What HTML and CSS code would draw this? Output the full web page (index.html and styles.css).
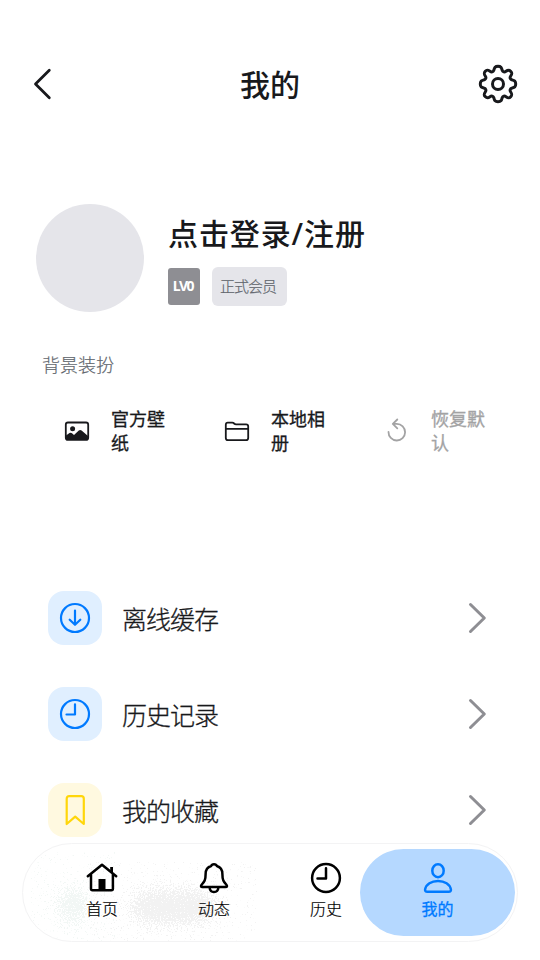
FILE: index.html
```html
<!DOCTYPE html>
<html lang="zh-CN">
<head>
<meta charset="utf-8">
<title>我的</title>
<link rel="stylesheet" href="styles.css">
</head>
<body>
<div class="app">
  <header class="topbar">
    <svg class="back" width="20" height="32" viewBox="0 0 20 32"><path d="M17.3 2.3 3.5 16l13.8 13.7"/></svg>
    <h1>我的</h1>
    <svg class="gear" width="40" height="40" viewBox="-20 -20 40 40"><circle r="5.5"/><path d="M-4.2-13.7C-3.4-16.5-3.2-17.7 0-17.7S3.4-16.5 4.2-13.7C5-12 6.4-11.6 8-12.7C10.2-14.2 11-14.2 12.7-12.7S14.2-10.2 12.7-8C11.6-6.4 12-5 13.7-4.2C16.5-3.4 17.7-3.2 17.7 0S16.5 3.4 13.7 4.2C12 5 11.6 6.4 12.7 8C14.2 10.2 14.2 11 12.7 12.7S10.2 14.2 8 12.7C6.4 11.6 5 12 4.2 13.7C3.4 16.5 3.2 17.7 0 17.7S-3.4 16.5-4.2 13.7C-5 12-6.4 11.6-8 12.7C-10.2 14.2-11 14.2-12.7 12.7S-14.2 10.2-12.7 8C-11.6 6.4-12 5-13.7 4.2C-16.5 3.4-17.7 3.2-17.7 0S-16.5-3.4-13.7-4.2C-12-5-11.6-6.4-12.7-8C-14.2-10.2-14.2-11-12.7-12.7S-10.2-14.2-8-12.7C-6.4-11.6-5-12-4.2-13.7Z"/></svg>
  </header>
  <section class="profile">
    <div class="avatar"></div>
    <div class="identity">
      <h2>点击登录/注册</h2>
      <div class="badges"><span class="level">LV0</span><span class="member">正式会员</span></div>
    </div>
  </section>
  <section class="decor">
    <h3>背景装扮</h3>
    <div class="actions">
      <div class="action">
        <svg width="26" height="26" viewBox="0 0 26 26"><rect x="1.8" y="4.5" width="22.4" height="17.4" rx="2.2"/><circle class="solid" cx="8.6" cy="10.7" r="2.5"/><path class="solid" d="M2 17.5 5.5 15Q7 14.2 8.3 15.5L10 17l4.8-4.5q1.4-1.2 2.8 0L24 18v3q0 1-1 1H3q-1 0-1-1z"/></svg>
        <span>官方壁纸</span>
      </div>
      <div class="action">
        <svg width="26" height="26" viewBox="0 0 26 26"><path d="M1.8 20V6.7q0-2 2-2h4.5q1 0 1.8.8t2 .8h10q2.1 0 2.1 2V20q0 2.2-2.2 2.2H4q-2.2 0-2.2-2.2zM2 10.9h22"/></svg>
        <span>本地相册</span>
      </div>
      <div class="action disabled">
        <svg width="26" height="26" viewBox="0 0 26 26"><path d="M4.5 14a8.3 8.3 0 1 0 8.3-8.1H9.2M13.3 1.5 8.8 5.9l4.5 4.4"/></svg>
        <span>恢复默认</span>
      </div>
    </div>
  </section>
  <main class="list">
    <div class="row">
      <span class="tile"><svg width="32" height="32" viewBox="0 0 32 32"><circle cx="16" cy="16" r="14"/><path d="M16 8.5v14M10.7 17.7 16 22.8l5.3-5.1"/></svg></span>
      <span class="label">离线缓存</span>
      <svg class="chevron" width="20" height="32" viewBox="0 0 20 32"><path d="M2.5 2.5 16.3 16 2.5 29.5"/></svg>
    </div>
    <div class="row">
      <span class="tile"><svg width="32" height="32" viewBox="0 0 32 32"><circle cx="16" cy="16" r="14"/><path d="M16 6.3v10.2H7.5"/></svg></span>
      <span class="label">历史记录</span>
      <svg class="chevron" width="20" height="32" viewBox="0 0 20 32"><path d="M2.5 2.5 16.3 16 2.5 29.5"/></svg>
    </div>
    <div class="row">
      <span class="tile yellow"><svg width="32" height="32" viewBox="0 0 32 32"><path d="M7.7 30V4.7q0-2.500 2.500-2.500h12.100q2.500 0 2.500 2.500V30L16.200 22.700z"/></svg></span>
      <span class="label">我的收藏</span>
      <svg class="chevron" width="20" height="32" viewBox="0 0 20 32"><path d="M2.5 2.5 16.3 16 2.5 29.5"/></svg>
    </div>
  </main>
  <nav class="tabbar">
    <svg class="grain" width="494" height="97" viewBox="0 0 494 97">
      <filter id="grain" x="-50%" y="-100%" width="200%" height="300%" color-interpolation-filters="sRGB">
        <feGaussianBlur in="SourceGraphic" stdDeviation="10" result="soft"/>
        <feTurbulence type="fractalNoise" baseFrequency=".7" numOctaves="2" seed="4"/>
        <feColorMatrix values="0 0 0 0 0  0 0 0 0 0  0 0 0 0 0  2 0 0 0 -.5" result="noise"/>
        <feComposite in="soft" in2="noise" operator="arithmetic" k2="1" k3="1"/>
        <feComponentTransfer result="dots"><feFuncA type="linear" slope="8" intercept="-7"/></feComponentTransfer>
        <feFlood class="ink"/>
        <feComposite in2="dots" operator="in"/>
      </filter>
      <filter id="grain-green" x="-100%" y="-100%" width="300%" height="300%" color-interpolation-filters="sRGB">
        <feGaussianBlur in="SourceGraphic" stdDeviation="10" result="soft"/>
        <feTurbulence type="fractalNoise" baseFrequency=".7" numOctaves="2" seed="9"/>
        <feColorMatrix values="0 0 0 0 0  0 0 0 0 0  0 0 0 0 0  2 0 0 0 -.5" result="noise"/>
        <feComposite in="soft" in2="noise" operator="arithmetic" k2="1" k3="1"/>
        <feComponentTransfer result="dots"><feFuncA type="linear" slope="8" intercept="-7"/></feComponentTransfer>
        <feFlood class="green-ink"/>
        <feComposite in2="dots" operator="in"/>
      </filter>
      <rect x="108" y="48" width="84" height="30" rx="15" filter="url(#grain)"/>
      <ellipse cx="50" cy="62" rx="14" ry="18" filter="url(#grain-green)"/>
    </svg>
    <div class="tab">
      <svg width="32" height="32" viewBox="0 0 32 32"><path d="M1.8 14.2 16 2.7l14.2 11.5M5 12.3v14.5q0 1.5 1.5 1.5h18.9q1.5 0 1.5-1.5V12.3"/><path class="solid" d="M12.5 17h7v11h-7zM24.2 5h2.8v7l-2.8-2.300z"/></svg>
      <span>首页</span>
    </div>
    <div class="tab">
      <svg width="32" height="32" viewBox="0 0 32 32"><path d="M16 2.2q-2.3 0-2.8 1.8C9.3 5 7.6 8.2 7.6 12.2c0 6-1.2 7.5-3.8 10.3-1.3 1.5-1 2.4.7 2.4h23c1.7 0 2-.9.7-2.4C25.6 19.7 24.4 18.2 24.4 12.2c0-4-1.7-7.2-5.6-8.2Q18.3 2.2 16 2.2zM11.6 25.5c.5 6 8.300 6 8.800 0"/></svg>
      <span>动态</span>
    </div>
    <div class="tab">
      <svg width="32" height="32" viewBox="0 0 32 32"><circle cx="16" cy="16" r="13.9"/><path d="M16 6.3v10.2H7.5"/></svg>
      <span>历史</span>
    </div>
    <div class="tab active">
      <svg width="32" height="32" viewBox="0 0 32 32"><ellipse cx="16" cy="8.7" rx="5.7" ry="6.5"/><path d="M5.3 29.8q-2.500 0-2.200-2.400C4 22.200 9.400 18.900 16 18.900s12 3.300 12.900 8.500q.3 2.400-2.200 2.400z"/></svg>
      <span>我的</span>
    </div>
  </nav>
</div>
</body>
</html>
```
FILE: styles.css
```css
* { box-sizing: border-box; }
body {
  margin: 0;
  background: #fff;
  color: #18191c;
  font-family: "Noto Sans", "Noto Sans CJK SC", sans-serif;
}
.app {
  position: relative;
  width: 540px;
  height: 960px;
  overflow: hidden;
}
svg {
  flex: none;
  fill: none;
  stroke: currentColor;
  stroke-width: 2.5;
  stroke-linecap: round;
  stroke-linejoin: round;
}
svg .solid { fill: currentColor; stroke: none; }
h1, h2, h3 { margin: 0; font-weight: 500; }
.topbar {
  display: grid;
  grid-template-columns: 60px 1fr 60px;
  align-items: center;
  height: 168px;
  padding: 0 20px 0 32px;
}
.topbar h1 {
  padding: 2px 12px 0 0;
  font-size: 30px;
  line-height: 40px;
  text-align: center;
}
.back { stroke-width: 2.8; }
.gear { justify-self: end; margin-right: 2px; stroke-width: 3; }
.profile {
  display: flex;
  gap: 24px;
  padding: 36px 36px 0;
}
.avatar {
  flex: none;
  width: 108px;
  height: 108px;
  border-radius: 50%;
  background: #e5e5ea;
}
.identity { padding-top: 8px; }
.identity h2 {
  font-size: 30px;
  line-height: 44px;
  letter-spacing: .9px;
}
.badges {
  display: flex;
  align-items: center;
  gap: 12px;
  margin-top: 11px;
}
.level, .member {
  display: flex;
  align-items: center;
  justify-content: center;
}
.level {
  width: 32px;
  height: 37px;
  padding: 0 2px 2px 0;
  border-radius: 3px;
  background: #8e8e93;
  color: #fff;
  font-size: 14px;
  font-weight: 700;
  letter-spacing: -1.4px;
}
.member {
  width: 75px;
  height: 39px;
  padding: 0 3px 2px 0;
  border-radius: 6px;
  background: #e5e5ea;
  color: #61666d;
  font-size: 15px;
  font-weight: 300;
  letter-spacing: -1px;
  -webkit-text-stroke: .2px;
}
.decor h3 {
  padding: 39px 42px 0;
  color: #61666d;
  font-size: 18px;
  font-weight: 300;
  line-height: 28px;
  -webkit-text-stroke: .2px;
}
.actions {
  display: grid;
  grid-template-columns: repeat(3, 160px);
  margin-top: 28px;
  padding-left: 64px;
}
.action {
  display: flex;
  align-items: center;
  gap: 21px;
}
.action svg { stroke-width: 1.8; }
.action span {
  width: 60px;
  font-size: 18px;
  font-weight: 400;
  line-height: 24px;
  -webkit-text-stroke: .3px;
}
.action.disabled { color: #a3a3a4; }
.list { padding: 115px 52px 0 48px; }
.row {
  display: flex;
  align-items: center;
  height: 96px;
}
.tile {
  display: flex;
  align-items: center;
  justify-content: center;
  width: 54px;
  height: 54px;
  border-radius: 16px;
  background: #e0efff;
  color: #007aff;
}
.tile svg { stroke-width: 2.2; }
.tile.yellow { background: #fff9e0; color: #ffd60a; }
.label {
  flex: 1;
  padding-top: 2px;
  margin-left: 20px;
  font-size: 25px;
  font-weight: 300;
  line-height: 36px;
  letter-spacing: -1px;
  -webkit-text-stroke: .3px;
}
.chevron { color: #8e8e93; stroke-width: 3; }
.tabbar {
  position: absolute;
  left: 22px;
  top: 843px;
  width: 496px;
  height: 99px;
  display: flex;
  padding: 5px 2px 5px 23px;
  overflow: hidden;
  border: 1px solid #f3f3f4;
  border-radius: 50px;
  background: #fff;
  color: #000;
}
.grain {
  position: absolute;
  left: 0;
  top: 0;
  fill: #000;
  stroke: none;
}
.ink { flood-color: #f2f2f2; }
.green-ink { flood-color: #f2f7f5; }
.tab {
  position: relative;
  flex: 0 0 112px;
  display: flex;
  flex-direction: column;
  align-items: center;
  padding-top: 13px;
  font-size: 16px;
  font-weight: 300;
  line-height: 24px;
  -webkit-text-stroke: .2px;
}
.tab span { margin-top: 3px; }
.tab.active {
  flex-basis: 155px;
  height: 87px;
  margin-left: -22px;
  border-radius: 44px;
  background: #b5d8ff;
  color: #007aff;
  font-weight: 400;
  -webkit-text-stroke: .3px;
}
```
